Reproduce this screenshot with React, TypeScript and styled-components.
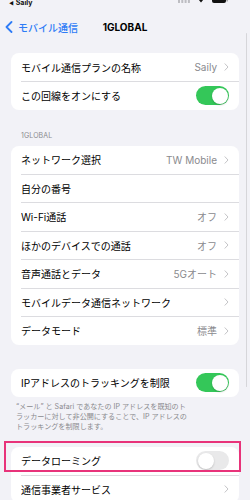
import React from "react";
import styled, { createGlobalStyle } from "styled-components";

const Global = createGlobalStyle`
  html, body { margin: 0; padding: 0; background: #f2f2f7; }
  body {
    font-family: Inter, "Noto Sans CJK JP", sans-serif;
    -webkit-font-smoothing: antialiased;
    overflow: hidden;
  }
`;

const Page = styled.div`
  position: relative;
  width: 250px;
  height: 500px;
  background: #f2f2f7;
  overflow: hidden;
`;

const StatusBar = styled.div`
  height: 12px;
  display: flex;
  align-items: flex-start;
  justify-content: space-between;
  padding: 0 22px 0 9px;
`;

const Carrier = styled.div`
  font-size: 7px;
  line-height: 8px;
  margin-top: -1px;
  font-weight: 700;
  color: #111;
  display: flex;
  align-items: center;
  gap: 2px;
`;

const StatusIcons = styled.div`
  display: flex;
  align-items: flex-start;
  gap: 8px;
  margin-top: -3px;
`;

const NavBar = styled.div`
  position: relative;
  height: 30px;
  display: flex;
  align-items: center;
`;

const Back = styled.div`
  display: flex;
  align-items: center;
  gap: 5px;
  padding-left: 5px;
  color: #2f7cf6;
  font-size: 10px;
  font-weight: 500;
`;

const NavTitle = styled.div`
  position: absolute;
  left: 0;
  right: 0;
  text-align: center;
  font-size: 10px;
  font-weight: 700;
  color: #000;
  pointer-events: none;
`;

const Card = styled.div<{ $top?: number }>`
  margin: ${(p) => p.$top ?? 0}px 11px 0 11px;
  background: #fff;
  border-radius: 8px;
  overflow: hidden;
`;

const Row = styled.div`
  height: 28px;
  display: flex;
  align-items: center;
  padding: 0 10px 0 10px;
  font-size: 10px;
  color: #000;
`;

const Sep = styled.div`
  height: 0.5px;
  margin-left: 10px;
  background: #dcdce0;
`;

const Label = styled.div`
  flex: 1;
  white-space: nowrap;
  overflow: hidden;
`;

const Value = styled.div`
  color: #8a8a8e;
  margin-right: 7px;
  white-space: nowrap;
`;

const SectionHeader = styled.div`
  margin: 21px 0 5px 21px;
  height: 10px;
  line-height: 10px;
  font-size: 7px;
  color: #8a8a8e;
  letter-spacing: 0.1px;
`;

const Footer = styled.div`
  padding: 5px 14px 0 16px;
  font-size: 7.1px;
  line-height: 10px;
  color: #8a8a8e;
  white-space: nowrap;
`;

const Track = styled.div<{ $on: boolean }>`
  position: relative;
  width: 33px;
  height: 19px;
  border-radius: 10px;
  background: ${(p) => (p.$on ? "#34c759" : "#e9e9ea")};
  flex-shrink: 0;
`;

const Knob = styled.div<{ $on: boolean }>`
  position: absolute;
  top: 1.5px;
  left: ${(p) => (p.$on ? "15.5px" : "1.5px")};
  width: 16px;
  height: 16px;
  border-radius: 50%;
  background: #fff;
  box-shadow: 0 1px 2px rgba(0, 0, 0, 0.18);
`;

const Highlight = styled.div`
  position: absolute;
  left: 4px;
  top: 441px;
  width: 233px;
  height: 27px;
  border: 2px solid #e8337a;
`;

const ScrollIndicator = styled.div`
  position: absolute;
  left: 245.5px;
  top: 33px;
  width: 1.5px;
  height: 354px;
  border-radius: 1px;
  background: #d6d6da;
`;

const Chevron = () => (
  <svg width="5" height="8" viewBox="0 0 5 8" style={{ flexShrink: 0 }}>
    <path d="M1 0.8 L4 4 L1 7.2" fill="none" stroke="#c4c4c7" strokeWidth="1" strokeLinecap="round" strokeLinejoin="round" />
  </svg>
);

const Toggle = ({ on }: { on: boolean }) => (
  <Track $on={on}>
    <Knob $on={on} />
  </Track>
);

type Item = { label: string; value?: string; chevron?: boolean; toggle?: boolean; on?: boolean };

const Group = ({ items, top }: { items: Item[]; top?: number }) => (
  <Card $top={top}>
    {items.map((it, i) => (
      <React.Fragment key={i}>
        {i > 0 && <Sep />}
        <Row>
          <Label>{it.label}</Label>
          {it.value && <Value>{it.value}</Value>}
          {it.chevron && <Chevron />}
          {it.toggle && <Toggle on={!!it.on} />}
        </Row>
      </React.Fragment>
    ))}
  </Card>
);

export default function App() {
  return (
    <Page>
      <Global />
      <StatusBar>
        <Carrier>
          <span style={{ fontSize: 5 }}>◀</span>Saily
        </Carrier>
        <StatusIcons>
          <svg width="12" height="6" viewBox="0 0 12 6">
            <rect x="0" y="2" width="2" height="4" rx="0.5" fill="#bdbdc2" />
            <rect x="3.3" y="1" width="2" height="5" rx="0.5" fill="#bdbdc2" />
            <rect x="6.6" y="0" width="2" height="6" rx="0.5" fill="#bdbdc2" />
            <rect x="9.9" y="0" width="2" height="6" rx="0.5" fill="#bdbdc2" />
          </svg>
          <svg width="6" height="6" viewBox="0 0 6 6">
            <path d="M3 5.5 L0.5 2.5 Q3 0.5 5.5 2.5 Z" fill="#111" />
          </svg>
          <svg width="16" height="6" viewBox="0 0 16 6">
            <rect x="0" y="0" width="14" height="6" rx="2" fill="#111" />
            <rect x="14.5" y="1.5" width="1.2" height="3" rx="0.5" fill="#888" />
          </svg>
        </StatusIcons>
      </StatusBar>
      <NavBar>
        <Back>
          <svg width="8" height="12" viewBox="0 0 8 12">
            <path d="M6.5 1 L1.5 6 L6.5 11" fill="none" stroke="#2f7cf6" strokeWidth="1.8" strokeLinecap="round" strokeLinejoin="round" />
          </svg>
          モバイル通信
        </Back>
        <NavTitle>1GLOBAL</NavTitle>
      </NavBar>

      <Group
        top={11}
        items={[
          { label: "モバイル通信プランの名称", value: "Saily", chevron: true },
          { label: "この回線をオンにする", toggle: true, on: true },
        ]}
      />

      <SectionHeader>1GLOBAL</SectionHeader>
      <Group
        items={[
          { label: "ネットワーク選択", value: "TW Mobile", chevron: true },
          { label: "自分の番号" },
          { label: "Wi-Fi通話", value: "オフ", chevron: true },
          { label: "ほかのデバイスでの通話", value: "オフ", chevron: true },
          { label: "音声通話とデータ", value: "5Gオート", chevron: true },
          { label: "モバイルデータ通信ネットワーク", chevron: true },
          { label: "データモード", value: "標準", chevron: true },
        ]}
      />

      <Group top={24} items={[{ label: "IPアドレスのトラッキングを制限", toggle: true, on: true }]} />
      <Footer>
        “メール” と Safari であなたの IP アドレスを既知のト
        <br />
        ラッカーに対して非公開にすることで、IP アドレスの
        <br />
        トラッキングを制限します。
      </Footer>

      <Group
        top={15}
        items={[
          { label: "データローミング", toggle: true, on: false },
          { label: "通信事業者サービス", chevron: true },
        ]}
      />

      <Highlight />
      <ScrollIndicator />
    </Page>
  );
}
